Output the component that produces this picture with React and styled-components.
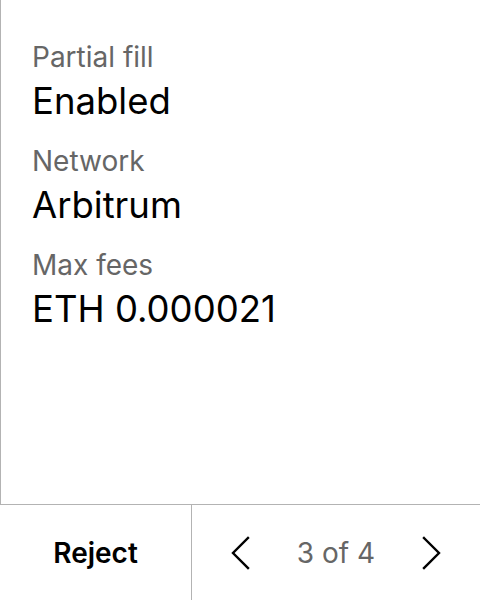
import styled, { createGlobalStyle } from 'styled-components'

const GlobalStyle = createGlobalStyle`
	html, body {
		margin: 0;
		padding: 0;
		background: #fff;
	}
	body {
		font-family: Inter, 'Noto Sans', sans-serif;
	}
`

const details = [
	{ label: 'Partial fill', value: 'Enabled' },
	{ label: 'Network', value: 'Arbitrum' },
	{ label: 'Max fees', value: 'ETH 0.000021' },
]

const Chevron = ({ dir }) => (
	<svg width='20' height='34' viewBox='0 0 20 34' fill='none'>
		<polyline
			points={dir === 'left' ? '17,2 2,17 17,32' : '3,2 18,17 3,32'}
			stroke='#000'
			strokeWidth='2.4'
			strokeLinecap='square'
			strokeLinejoin='miter'
		/>
	</svg>
)

const App = () => {
	return (
		<Wrapper>
			<GlobalStyle />
			<Details>
				{details.map(item => (
					<Item key={item.label}>
						<Label>{item.label}</Label>
						<Value>{item.value}</Value>
					</Item>
				))}
			</Details>
			<Footer>
				<RejectButton type='button'>Reject</RejectButton>
				<Pager>
					<ArrowButton type='button' aria-label='Previous'>
						<Chevron dir='left' />
					</ArrowButton>
					<Count>3 of 4</Count>
					<ArrowButton type='button' aria-label='Next'>
						<Chevron dir='right' />
					</ArrowButton>
				</Pager>
			</Footer>
		</Wrapper>
	)
}

const Wrapper = styled.main`
	width: 480px;
	height: 600px;
	display: flex;
	flex-direction: column;
	overflow: hidden;
`

const Details = styled.section`
	flex: 1;
	display: flex;
	flex-direction: column;
	gap: 21px;
	padding: 40px 0 0 31px;
	border-left: 1px solid #b3b3b3;
	border-bottom: 1px solid #b3b3b3;
`

const Item = styled.div`
	display: flex;
	flex-direction: column;
	gap: 5px;
`

const Label = styled.span`
	font-size: 28px;
	line-height: 34px;
	color: #666;
`

const Value = styled.span`
	font-size: 36.5px;
	line-height: 44px;
	color: #000;
`

const Footer = styled.footer`
	height: 95px;
	display: grid;
	grid-template-columns: 192px 1fr;
`

const RejectButton = styled.button`
	border: none;
	border-right: 1px solid #b3b3b3;
	background: transparent;
	font-family: Inter, sans-serif;
	font-size: 28px;
	font-weight: 600;
	color: #000;
	cursor: pointer;
	padding: 0;
`

const Pager = styled.div`
	display: flex;
	align-items: center;
	justify-content: center;
	gap: 46px;
`

const ArrowButton = styled.button`
	display: flex;
	border: none;
	background: transparent;
	padding: 0;
	cursor: pointer;
`

const Count = styled.span`
	font-size: 28px;
	color: #666;
`

export default App
